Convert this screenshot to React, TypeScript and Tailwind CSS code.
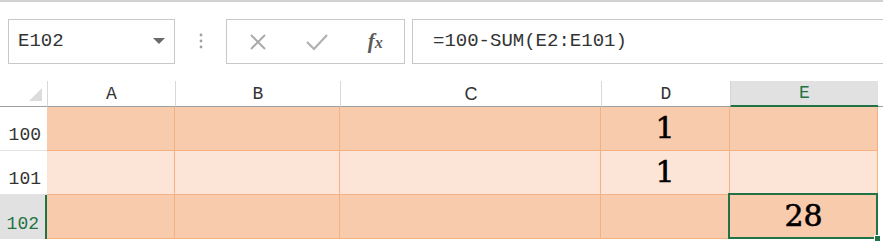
import React from 'react';

const mono = { fontFamily: '"Liberation Mono", "DejaVu Sans Mono", monospace' };
const serif = { fontFamily: '"DejaVu Serif", "Liberation Serif", serif' };

const columns = [
  { key: 'A', w: 'w-[128px]', font: mono },
  { key: 'B', w: 'w-[165px]', font: mono },
  { key: 'C', w: 'w-[261px]', font: { fontFamily: '"Liberation Sans", Arial, sans-serif' } },
  { key: 'D', w: 'w-[129px]', font: mono },
  { key: 'E', w: 'w-[148px]', font: mono },
];

const rows = [
  { num: 100, bg: 'bg-[#f8cbad]', values: { D: '1' } as Record<string, string> },
  { num: 101, bg: 'bg-[#fce4d6]', values: { D: '1' } as Record<string, string> },
  { num: 102, bg: 'bg-[#f8cbad]', values: { E: '28' } as Record<string, string>, active: true },
];

function Toolbar() {
  return (
    <div className="flex h-[79px] items-start pl-2 pt-[17px]">
      <div className="flex h-[45px] w-[167px] items-center justify-between border border-[#c8c8c8] bg-white pl-[9px] pr-[9px]">
        <span className="text-[19px] text-[#333]" style={mono}>E102</span>
        <svg width="12" height="7" viewBox="0 0 12 7">
          <polygon points="0,0 12,0 6,6" fill="#6b6b6b" />
        </svg>
      </div>
      <div className="flex w-[51px] justify-center pt-[14px]">
        <svg width="4" height="16" viewBox="0 0 4 16">
          <circle cx="2" cy="2" r="1.4" fill="#a0a0a0" />
          <circle cx="2" cy="8" r="1.4" fill="#a0a0a0" />
          <circle cx="2" cy="14" r="1.4" fill="#a0a0a0" />
        </svg>
      </div>
      <div className="flex h-[45px] w-[179px] items-center border border-[#c8c8c8] bg-white">
        <div className="flex w-[60px] justify-center pl-[2px]">
          <svg width="18" height="18" viewBox="0 0 18 18" stroke="#a8a8a8" strokeWidth="1.8" fill="none">
            <path d="M2 2 L16 16 M16 2 L2 16" />
          </svg>
        </div>
        <div className="flex w-[60px] justify-center">
          <svg width="22" height="18" viewBox="0 0 22 18" stroke="#b0b0b0" strokeWidth="2.2" fill="none">
            <path d="M1 9 L8 16 L21 2" />
          </svg>
        </div>
        <div className="flex w-[58px] justify-center">
          <span className="text-[21px] font-bold italic text-[#5a5a5a]" style={{ fontFamily: '"Liberation Serif", serif' }}>
            f<span className="text-[16px]">x</span>
          </span>
        </div>
      </div>
      <div className="ml-[7px] flex h-[45px] flex-1 items-center border border-r-0 border-[#c8c8c8] bg-white pl-[20px]">
        <span className="text-[19px] text-[#333]" style={mono}>=100-SUM(E2:E101)</span>
      </div>
    </div>
  );
}

function HeaderRow() {
  return (
    <div className="flex h-[26px]">
      <div className="flex w-[47px] items-end justify-end border-b border-[#9e9e9e] bg-white pb-[5px] pr-[5px]">
        <svg width="13" height="13" viewBox="0 0 13 13">
          <polygon points="13,0 13,13 0,13" fill="#dcdcdc" />
        </svg>
      </div>
      {columns.map((c) => {
        const active = c.key === 'E';
        return (
          <div
            key={c.key}
            className={`${c.w} flex items-end justify-center border-l pb-[2px] leading-[20px] ${
              active
                ? 'border-[#d4d4d4] border-b-2 border-b-[#217346] bg-[#e1e1e1] text-[#217346]'
                : 'border-[#d8d8d8] border-b border-b-[#9e9e9e] bg-white text-[#333]'
            } text-[18px]`}
            style={c.font}
          >
            {c.key}
          </div>
        );
      })}
      <div className="flex-1 border-b border-[#9e9e9e] bg-white" />
    </div>
  );
}

function DataRow({ row }: { row: (typeof rows)[number] }) {
  return (
    <div className="flex h-[44px]">
      <div
        className={`flex w-[47px] items-end justify-end pr-[6px] pb-[1px] text-[18px] ${
          row.active
            ? 'border-r-2 border-r-[#217346] bg-[#e1e1e1] text-[#217346]'
            : 'border-b border-b-[#e4e4e4] bg-white text-[#333]'
        }`}
        style={mono}
      >
        {row.num}
      </div>
      {columns.map((c) => (
        <div
          key={c.key}
          className={`${c.w} ${row.bg} flex items-end justify-center border-r border-b border-[#f4b183] pb-[2px] text-[30px] leading-[40px] text-black [-webkit-text-stroke:0.6px_black]`}
          style={serif}
        >
          {row.values[c.key] ?? ''}
        </div>
      ))}
      <div className="flex-1 bg-white" />
    </div>
  );
}

export default function App() {
  return (
    <div className="relative h-[245px] w-[883px] overflow-hidden bg-white">
      <div className="h-[2px] bg-[#d2d2d2]" />
      <Toolbar />
      <HeaderRow />
      {rows.map((r) => (
        <DataRow key={r.num} row={r} />
      ))}
      {/* active cell outline */}
      <div className="pointer-events-none absolute left-[728px] top-[193px] h-[46px] w-[150px] border-2 border-[#217346]" />
      <div className="absolute left-[874px] top-[235px] h-[7px] w-[7px] border border-white bg-[#217346]" />
    </div>
  );
}
